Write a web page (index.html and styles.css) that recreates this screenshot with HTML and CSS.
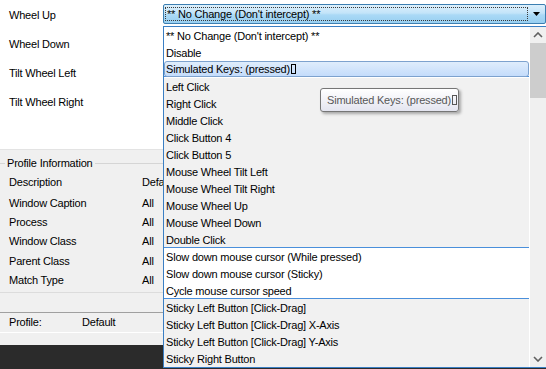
FILE: index.html
```html
<!DOCTYPE html>
<html lang="en">
<head>
  <meta charset="UTF-8">
  <title>Button Mappings</title>
  <link rel="stylesheet" href="styles.css">
</head>
<body>

  <div class="mapping">
    <div class="map-row">
      <span class="map-label">Wheel Up</span>
      <div class="combo">
        <div class="combo-value">** No Change (Don't intercept) **</div>
        <div class="combo-arrow">
          <svg width="7" height="4" viewBox="0 0 7 4"><polygon points="0,0 7,0 3.5,4" fill="#000"/></svg>
        </div>
      </div>
    </div>
    <div class="map-row"><span class="map-label">Wheel Down</span></div>
    <div class="map-row"><span class="map-label">Tilt Wheel Left</span></div>
    <div class="map-row"><span class="map-label">Tilt Wheel Right</span></div>
  </div>

  <div class="profile-info">
    <div class="group-title"><span>Profile Information</span></div>
    <div class="info-row first"><span class="info-key">Description</span><span>Default</span></div>
    <div class="info-row"><span class="info-key">Window Caption</span><span>All</span></div>
    <div class="info-row"><span class="info-key">Process</span><span>All</span></div>
    <div class="info-row"><span class="info-key">Window Class</span><span>All</span></div>
    <div class="info-row"><span class="info-key">Parent Class</span><span>All</span></div>
    <div class="info-row"><span class="info-key">Match Type</span><span>All</span></div>
  </div>

  <div class="status">
    <span class="status-key">Profile:</span>
    <span>Default</span>
  </div>

  <div class="taskbar"></div>

  <!-- open drop-down of the Wheel Up combo -->
  <div class="dropdown">
    <div class="list">
      <div class="section white">
        <div class="item">** No Change (Don't intercept) **</div>
        <div class="item">Disable</div>
        <div class="item hot">Simulated Keys: (pressed)<span class="nochar"></span></div>
      </div>
      <div class="section grey">
        <div class="item">Left Click</div>
        <div class="item">Right Click</div>
        <div class="item">Middle Click</div>
        <div class="item">Click Button 4</div>
        <div class="item">Click Button 5</div>
        <div class="item">Mouse Wheel Tilt Left</div>
        <div class="item">Mouse Wheel Tilt Right</div>
        <div class="item">Mouse Wheel Up</div>
        <div class="item">Mouse Wheel Down</div>
        <div class="item">Double Click</div>
      </div>
      <div class="section white">
        <div class="item">Slow down mouse cursor (While pressed)</div>
        <div class="item">Slow down mouse cursor (Sticky)</div>
        <div class="item">Cycle mouse cursor speed</div>
      </div>
      <div class="section grey last">
        <div class="item">Sticky Left Button [Click-Drag]</div>
        <div class="item">Sticky Left Button [Click-Drag] X-Axis</div>
        <div class="item">Sticky Left Button [Click-Drag] Y-Axis</div>
        <div class="item">Sticky Right Button</div>
      </div>
    </div>
    <div class="scrollbar">
      <div class="scroll-btn">
        <svg width="10" height="6" viewBox="0 0 10 6"><polyline points="1,5 5,1 9,5" fill="none" stroke="#606060" stroke-width="1.6"/></svg>
      </div>
      <div class="scroll-thumb"></div>
      <div class="scroll-track"></div>
      <div class="scroll-btn">
        <svg width="10" height="6" viewBox="0 0 10 6"><polyline points="1,1 5,5 9,1" fill="none" stroke="#606060" stroke-width="1.6"/></svg>
      </div>
    </div>
  </div>

  <div class="tooltip">Simulated Keys: (pressed)<span class="nochar"></span></div>

</body>
</html>
```

FILE: styles.css
```css
body {
  margin: 0;
  height: 369px;
  overflow: hidden;
  position: relative;
  background: #f0f0f0;
  font-family: "Liberation Sans", Arial, sans-serif;
  font-size: 11px;
  letter-spacing: -0.2px;
  color: #000;
}

/* mapping rows */
.mapping {
  background: #fff;
  height: 149px;
  border-bottom: 1px solid #e3e3e3;
}

.map-row {
  display: flex;
  align-items: center;
  height: 29px;
}

.map-label {
  width: 154px;
  padding-left: 9px;
  flex-shrink: 0;
}

.combo {
  flex: 1;
  align-self: flex-start;
  margin-top: 4px;
  height: 20px;
  box-sizing: border-box;
  display: flex;
  border: 1px solid #3c7fb1;
  border-radius: 2px;
  background: linear-gradient(#dcf0fc, #c3e4f9 45%, #aad9f6 55%, #98cff1);
}

.combo-value {
  flex: 1;
  margin: 2px 0 2px 1px;
  padding-left: 1px;
  border: 1px dotted #3a3a3a;
  line-height: 13px;
}

.combo-arrow {
  width: 17px;
  display: flex;
  align-items: center;
  justify-content: center;
}

/* profile information */
.profile-info {
  padding-top: 5px;
  padding-bottom: 2px;
  border-bottom: 1px solid #dcdcdc;
}

.group-title {
  display: flex;
  align-items: center;
  height: 16px;
}

.group-title::before {
  content: "";
  width: 5px;
  height: 1px;
  background: #d5d5d5;
  margin-right: 2px;
}

.group-title::after {
  content: "";
  flex: 1;
  height: 1px;
  background: #d5d5d5;
  margin-left: 3px;
}

.info-row {
  display: flex;
  align-items: center;
  height: 19.4px;
}

.info-row.first {
  height: 22px;
}

.info-key {
  width: 133px;
  padding-left: 9px;
}

.status {
  display: flex;
  align-items: center;
  margin-top: 19px;
  height: 19px;
  border-top: 1px solid #a0a0a0;
  border-bottom: 1px solid #fff;
}

.status-key {
  width: 73px;
  padding-left: 9px;
}

.taskbar {
  margin-top: 12px;
  height: 24px;
  background: #2b2b2b;
}

/* drop-down list */
.dropdown {
  position: absolute;
  left: 163px;
  top: 26px;
  width: 383px;
  height: 342px;
  box-sizing: border-box;
  border: 1px solid #3b7fc4;
  border-right: none;
  display: flex;
  background: #fff;
}

.list {
  width: 365px;
  border-right: 1px solid #fff;
}

.section.white {
  background: #fff;
}

.section.grey {
  background: #f1f1f1;
}

.section {
  box-shadow: inset 0 -1px 0 #4a8fdb;
}

.section.last {
  box-shadow: none;
}

.item {
  height: 17px;
  line-height: 18px;
  padding-left: 2px;
  white-space: nowrap;
}

.item.hot {
  height: 16px;
  line-height: 15px;
  box-sizing: border-box;
  padding-left: 1px;
  margin-bottom: 1px;
  border: 1px solid #7da2ce;
  border-radius: 3px;
  background: linear-gradient(#dfedfc, #c4dcfb);
}

.nochar {
  display: inline-block;
  width: 3px;
  height: 8px;
  border: 1px solid currentColor;
  margin-left: 1px;
  vertical-align: -1px;
}

.scrollbar {
  width: 16px;
  display: flex;
  flex-direction: column;
  background: #f0f0f0;
}

.scroll-btn {
  height: 16px;
  display: flex;
  align-items: center;
  justify-content: center;
}

.scroll-thumb {
  height: 55px;
  background: #cdcdcd;
}

.scroll-track {
  flex: 1;
}

/* tooltip */
.tooltip {
  position: absolute;
  left: 320px;
  top: 88px;
  width: 139px;
  height: 24px;
  box-sizing: border-box;
  padding-left: 6px;
  line-height: 22px;
  white-space: nowrap;
  color: #575757;
  border: 1px solid #767676;
  border-radius: 3px;
  background: linear-gradient(#ffffff, #e4e5f0);
  box-shadow: 2px 2px 3px rgba(0, 0, 0, 0.3);
}
```
